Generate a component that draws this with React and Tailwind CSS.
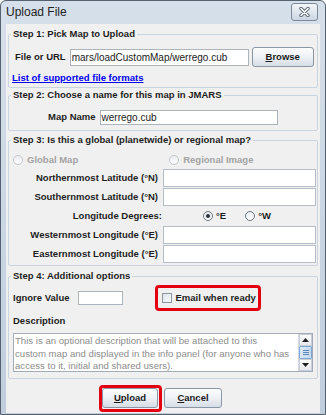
import React from "react";

const font = "font-['Liberation_Sans',Arial,sans-serif]";

// Java Windows look-and-feel push button, mnemonic letter underlined
const Button = ({ mnemonic, rest, className }) => (
  <div
    className={`flex items-center justify-center rounded-[3px] border border-[#8a96a4] bg-gradient-to-b from-[#fbfcfd] via-[#eef1f5] to-[#d6dde6] text-[9.5px] font-bold text-[#1b1b1b] ${className}`}
  >
    <span>
      <span className="underline">{mnemonic}</span>
      {rest}
    </span>
  </div>
);

const Radio = ({ checked, disabled }) => (
  <div
    className={`flex h-[10px] w-[10px] items-center justify-center rounded-full border bg-gradient-to-b from-[#e9ecef] to-[#ffffff] ${
      disabled ? "border-[#c2c6ca]" : "border-[#6f7880]"
    }`}
  >
    {checked && <div className="h-[4px] w-[4px] rounded-full bg-[#2a2f35]" />}
  </div>
);

const Legend = ({ children }) => (
  <legend className="ml-[2px] px-[2px] text-[9.5px] leading-[12px] font-bold text-[#1e1e1e]">
    {children}
  </legend>
);

const CoordRow = ({ label }) => (
  <div className="flex h-[18px] items-center">
    <div className="w-[150px] pr-[1px] text-right text-[9.5px] font-bold text-[#1e1e1e]">
      {label}
    </div>
    <div className="ml-[4px] h-[18px] w-[153px] border border-[#b4bcc5] bg-white" />
  </div>
);

const App = () => {
  return (
    <div
      className={`flex h-[415px] w-[326px] flex-col overflow-hidden rounded-t-[6px] border border-[#55616e] bg-gradient-to-b from-[#d6e0eb] to-[#bfcddd] ${font}`}
    >
      {/* title bar */}
      <div className="flex h-[23px] shrink-0 items-start">
        <div className="ml-[5px] mt-[4px] text-[12px] leading-[15px] text-[#222]">
          Upload File
        </div>
        <div className="ml-auto mr-[7px] mt-[2px] flex h-[18px] w-[27px] items-center justify-center rounded-[3px] border border-[#7d8998] bg-gradient-to-b from-[#f3f6f9] to-[#ccd6e2]">
          <svg width="11" height="10" viewBox="0 0 11 10">
            <path d="M2 1.5 L9 8.5 M9 1.5 L2 8.5" stroke="#5c6774" strokeWidth="3.4" strokeLinecap="round" />
            <path d="M2 1.5 L9 8.5 M9 1.5 L2 8.5" stroke="#ffffff" strokeWidth="1.6" strokeLinecap="round" />
          </svg>
        </div>
      </div>

      {/* dialog body */}
      <div className="mx-[5px] mb-[1px] flex-1 bg-[#f0f0f0] text-[#1e1e1e]">
        {/* Step 1 */}
        <fieldset className="mx-[2px] mt-[4px] rounded-[2px] border border-[#c9d4df] pb-[3px]">
          <Legend>Step 1: Pick Map to Upload</Legend>
          <div className="mt-[7px] flex h-[20px] items-center">
            <div className="ml-[6px] text-[9.5px] font-bold">File or URL</div>
            <div className="ml-[4px] flex h-[17px] w-[179px] items-center border border-[#abb3bc] bg-white pl-[1px] text-[10px] text-[#222]">
              mars/loadCustomMap/werrego.cub
            </div>
            <Button mnemonic="B" rest="rowse" className="ml-[3px] h-[20px] w-[62px]" />
          </div>
          <div className="ml-[3px] mt-[5px] h-[12px] text-[9.5px] leading-[12px] font-bold text-[#0000ee] underline">
            List of supported file formats
          </div>
        </fieldset>

        {/* Step 2 */}
        <fieldset className="mx-[2px] mt-[1px] rounded-[2px] border border-[#c9d4df] pb-[5px]">
          <Legend>Step 2: Choose a name for this map in JMARS</Legend>
          <div className="mt-[9px] flex h-[15px] items-center">
            <div className="ml-[39px] text-[9.5px] font-bold">Map Name</div>
            <div className="ml-[4px] flex h-[15px] w-[178px] items-center border border-[#abb3bc] bg-white pl-[1px] text-[10px] text-[#222]">
              werrego.cub
            </div>
          </div>
        </fieldset>

        {/* Step 3 */}
        <fieldset className="mx-[2px] mt-[3px] rounded-[2px] border border-[#c9d4df] pb-[2px]">
          <Legend>Step 3: Is this a global (planetwide) or regional map?</Legend>
          <div className="mt-[7px] flex h-[14px] items-center text-[9.5px] font-bold text-[#a3a3a3]">
            <div className="ml-[4px] flex items-center gap-[4px]">
              <Radio disabled />
              <span>Global Map</span>
            </div>
            <div className="ml-[91px] flex items-center gap-[4px]">
              <Radio disabled />
              <span>Regional Image</span>
            </div>
          </div>
          <div className="mt-[2px] flex flex-col gap-[1px]">
            <CoordRow label="Northernmost Latitude (°N)" />
            <CoordRow label="Southernmost Latitude (°N)" />
            <div className="flex h-[18px] items-center">
              <div className="w-[153px] text-right text-[9.5px] font-bold">Longitude Degrees:</div>
              <div className="ml-[41px] flex items-center gap-[3px] text-[9.5px] font-bold">
                <Radio checked />
                <span>°E</span>
              </div>
              <div className="ml-[19px] flex items-center gap-[3px] text-[9.5px] font-bold">
                <Radio />
                <span>°W</span>
              </div>
            </div>
            <CoordRow label="Westernmost Longitude (°E)" />
            <CoordRow label="Easternmost Longitude (°E)" />
          </div>
        </fieldset>

        {/* Step 4 */}
        <fieldset className="mx-[2px] mt-[4px] rounded-[2px] border border-[#c9d4df] pb-[6px]">
          <Legend>Step 4: Additional options</Legend>
          <div className="mt-[3px] flex h-[26px] items-center">
            <div className="ml-[4px] text-[9.5px] font-bold">Ignore Value</div>
            <div className="ml-[8px] h-[14px] w-[45px] border border-[#abb3bc] bg-white" />
            <div className="ml-[32px] flex h-[26px] w-[106px] items-center gap-[4px] rounded-[4px] border-[3px] border-[#e4000f] pl-[4px]">
              <div className="h-[10px] w-[10px] border border-[#8c96a0] bg-gradient-to-br from-[#dfe5ec] to-[#f7f9fb]" />
              <span className="text-[9.5px] font-bold">Email when ready</span>
            </div>
          </div>
          <div className="ml-[4px] mt-[4px] h-[12px] text-[9.5px] leading-[12px] font-bold">Description</div>
          <div className="ml-[4px] mt-[6px] flex h-[39px] w-[300px] border border-[#a4adb7] bg-white">
            <div className="min-w-0 flex-1 overflow-hidden pl-[1px] pt-[1px] text-[9.6px] leading-[12.5px] text-[#8d8d8d]">
              <div className="whitespace-nowrap">This is an optional description that will be attached to this</div>
              <div className="whitespace-nowrap">custom map and displayed in the info panel (for anyone who has</div>
              <div className="whitespace-nowrap">access to it, initial and shared users).</div>
            </div>
            <div className="flex w-[14px] shrink-0 flex-col border-l border-[#d3d8de] bg-[#f3f4f6]">
              <div className="flex h-[12px] items-center justify-center border border-[#c8ced5] bg-gradient-to-b from-[#fbfbfc] to-[#e6e9ed]">
                <svg width="7" height="4" viewBox="0 0 7 4">
                  <path d="M0 4 L3.5 0 L7 4 Z" fill="#1e1e1e" />
                </svg>
              </div>
              <div className="flex flex-1 flex-col items-center justify-center gap-[1px] rounded-[1px] border border-[#7fa6d4] bg-gradient-to-r from-[#dbe9f8] to-[#c4daf2]">
                <div className="h-px w-[6px] bg-[#5f87b8]" />
                <div className="h-px w-[6px] bg-[#5f87b8]" />
                <div className="h-px w-[6px] bg-[#5f87b8]" />
              </div>
              <div className="flex h-[12px] items-center justify-center border border-[#c8ced5] bg-gradient-to-b from-[#fbfbfc] to-[#e6e9ed]">
                <svg width="7" height="4" viewBox="0 0 7 4">
                  <path d="M0 0 L3.5 4 L7 0 Z" fill="#1e1e1e" />
                </svg>
              </div>
            </div>
          </div>
        </fieldset>

        {/* buttons */}
        <div className="mt-[6px] flex items-start justify-center gap-[2px] pr-[5px]">
          <div className="h-[27px] w-[63px] rounded-[4px] border-[3px] border-[#e4000f] pb-[1px] pr-[1px]">
            <Button mnemonic="U" rest="pload" className="h-[20px] w-[56px]" />
          </div>
          <Button mnemonic="C" rest="ancel" className="mt-[3px] h-[20px] w-[58px]" />
        </div>
      </div>
    </div>
  );
};

export default App;
